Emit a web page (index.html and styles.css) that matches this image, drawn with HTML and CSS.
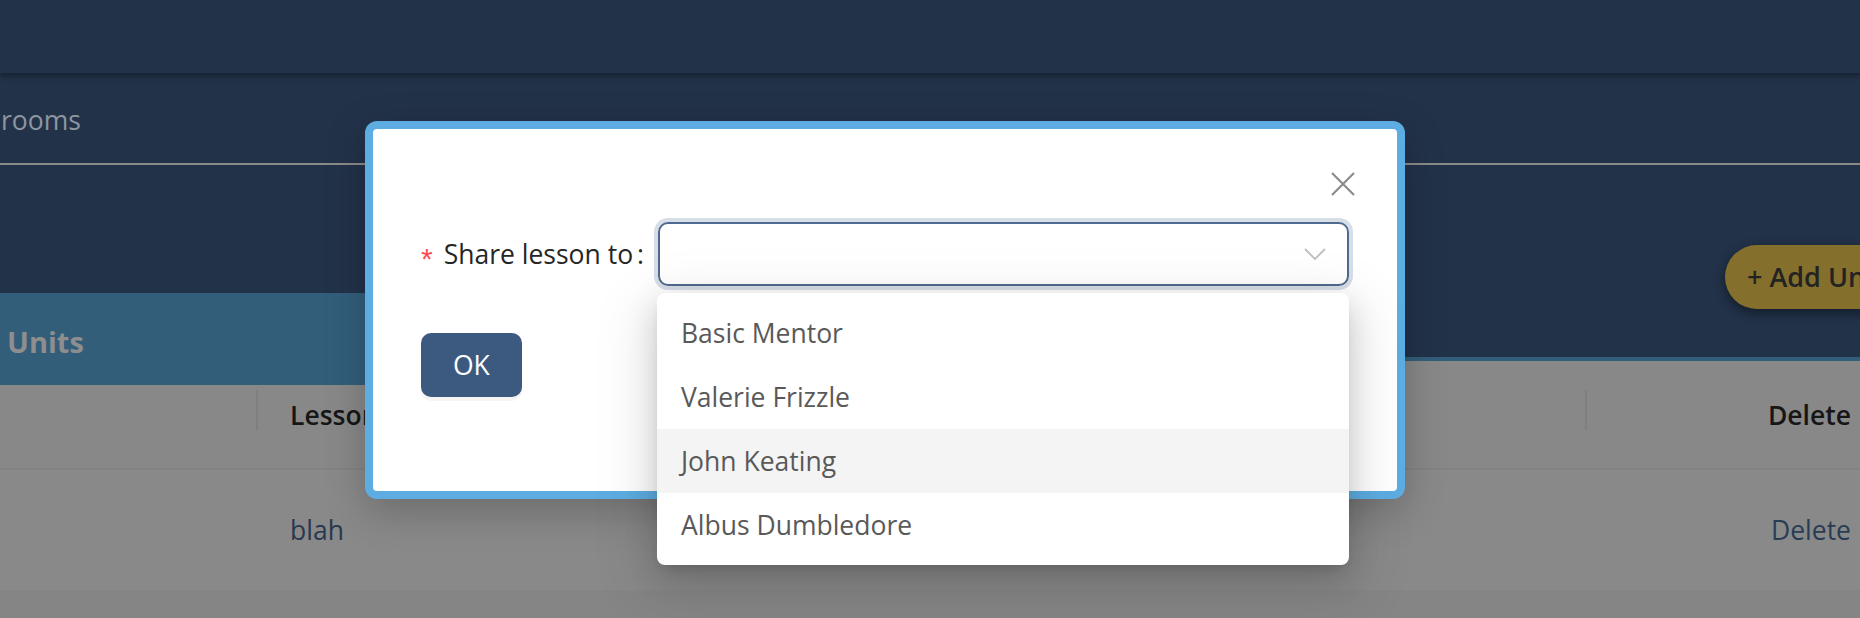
FILE: index.html
```html
<!DOCTYPE html>
<html lang="en">
<head>
<meta charset="utf-8">
<title>Share lesson</title>
<link rel="stylesheet" href="styles.css">
</head>
<body>
<header class="topbar"></header>
<nav class="nav"><span class="nav-item">rooms</span></nav>
<div class="toolbar"><button class="add-btn">+ Add Unit</button></div>
<section class="units">
  <div class="units-bar"><div class="units-tab">Units</div></div>
  <div class="units-line"></div>
  <div class="table-area">
    <div class="row head">
      <div class="cell"></div>
      <div class="cell sep">Lesson</div>
      <div class="cell sep right">Delete</div>
    </div>
    <div class="row body-row">
      <div class="cell"></div>
      <div class="cell name">blah</div>
      <div class="cell right link">Delete</div>
    </div>
  </div>
</section>

<div class="modal">
  <button class="close" aria-label="Close">
    <svg width="24" height="24" viewBox="0 0 24 24"><path d="M1 1L23 23M23 1L1 23" stroke="#8c8c8c" stroke-width="2.2" fill="none"/></svg>
  </button>
  <div class="form-row">
    <label class="label"><span class="req">*</span>Share lesson to<span class="colon">:</span></label>
    <div class="select">
      <svg width="22" height="12" viewBox="0 0 22 12"><path d="M1 1L11 11L21 1" fill="none" stroke="#bfbfbf" stroke-width="1.8"/></svg>
    </div>
  </div>
  <button class="ok">OK</button>
</div>

<div class="dropdown">
  <div class="option">Basic Mentor</div>
  <div class="option">Valerie Frizzle</div>
  <div class="option active">John Keating</div>
  <div class="option">Albus Dumbledore</div>
</div>
</body>
</html>
```
FILE: styles.css
```css
* { box-sizing: border-box; }
html, body { margin: 0; padding: 0; }
body {
  width: 1860px;
  height: 618px;
  overflow: hidden;
  position: relative;
  background: #223249;
  font-family: "Open Sans", "Noto Sans", sans-serif;
  font-size: 26.5px;
  line-height: 44px;
}
.topbar {
  height: 73px;
  background: #223249;
  box-shadow: 0 3px 6px rgba(0, 0, 0, 0.35);
  position: relative;
  z-index: 1;
}
.nav {
  height: 92px;
  padding: 25px 0 0 1px;
  border-bottom: 2px solid #8a8a8a;
}
.nav-item { color: #8d96a0; }
.toolbar {
  height: 128px;
  padding: 80px 0 0 1725px;
  display: flex;
  align-items: flex-start;
}
.add-btn {
  flex-shrink: 0;
  height: 64px;
  border: 0;
  border-radius: 32px;
  background: #84702c;
  padding: 0 24px 0 22px;
  font-family: "Open Sans", sans-serif;
  font-size: 27px;
  font-weight: 600;
  line-height: 44px;
  color: #232323;
  white-space: nowrap;
  box-shadow: 0 4px 12px rgba(0, 0, 0, 0.45);
  position: relative;
  z-index: 2;
}
.units { position: relative; }
.units-bar { height: 64px; position: relative; }
.units-tab {
  position: absolute;
  left: 0;
  top: 0;
  width: 560px;
  height: 92px;
  background: #325e7a;
  padding: 27px 0 0 7px;
  font-size: 29px;
  font-weight: 700;
  color: #8e8e8e;
  z-index: 1;
}
.units-line { height: 4px; background: #325e7a; }
.table-area { background: #858585; height: 257px; }
.row {
  display: grid;
  grid-template-columns: 256px 1fr 275px;
  align-items: center;
}
.row.head {
  height: 109px;
  background: #888888;
  border-bottom: 2px solid #838383;
  font-weight: 600;
  color: #161616;
}
.row.body-row { height: 120px; background: #898989; }
.cell { padding: 0 32px 0 34px; position: relative; height: 44px; }
.cell.right { text-align: right; padding-right: 9px; }
.head .sep::before {
  content: "";
  position: absolute;
  left: 0;
  top: -3px;
  width: 2px;
  height: 40px;
  background: #7f7f7f;
}
.name { color: #27384f; }
.link { color: #293c55; }

.modal {
  position: absolute;
  left: 365px;
  top: 121px;
  width: 1040px;
  border: 8px solid #5dade2;
  border-radius: 12px;
  background: #ffffff;
  padding: 93px 48px 94px 48px;
  box-shadow: 0 12px 40px rgba(0, 0, 0, 0.22);
  z-index: 10;
}
.close {
  position: absolute;
  top: 33px;
  right: 32px;
  width: 44px;
  height: 44px;
  padding: 0;
  border: 0;
  background: none;
  display: flex;
  align-items: center;
  justify-content: center;
}
.form-row { display: flex; align-items: center; height: 64px; }
.label {
  display: flex;
  align-items: center;
  white-space: nowrap;
  color: #262626;
}
.req {
  color: #ff4d4f;
  margin-right: 11px;
  font-family: "Liberation Sans", sans-serif;
  font-size: 30px;
  position: relative;
  top: 5px;
}
.colon { margin: 0 14px 0 4px; }
.select {
  flex: 1;
  height: 64px;
  border: 2px solid #4f6a8f;
  border-radius: 10px;
  box-shadow: 0 0 0 4px #d7dee7;
  display: flex;
  align-items: center;
  justify-content: flex-end;
  padding-right: 21px;
}
.ok {
  display: block;
  margin-top: 47px;
  height: 64px;
  padding: 0 30px;
  border: 2px solid transparent;
  border-radius: 10px;
  background: #3c5a80;
  color: #ffffff;
  font-family: inherit;
  font-size: 26.5px;
  line-height: 44px;
  box-shadow: 0 4px 0 rgba(0, 0, 0, 0.04);
}
.dropdown {
  position: absolute;
  left: 657px;
  top: 293px;
  width: 692px;
  padding: 8px 0;
  background: #ffffff;
  border-radius: 8px;
  box-shadow: 0 12px 32px rgba(0, 0, 0, 0.16), 0 6px 12px -8px rgba(0, 0, 0, 0.24), 0 18px 56px 16px rgba(0, 0, 0, 0.08);
  z-index: 11;
}
.option {
  height: 64px;
  padding: 10px 24px;
  color: #595959;
}
.option.active { background: #f4f4f4; }
```
